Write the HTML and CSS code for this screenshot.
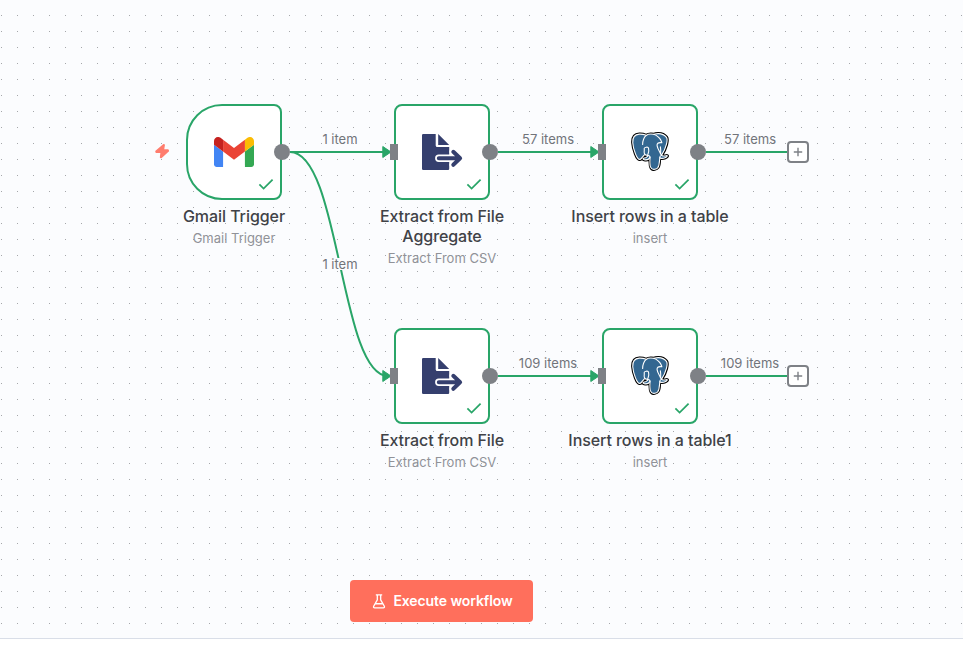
FILE: index.html
```html
<!DOCTYPE html>
<html lang="en">
<head>
<meta charset="utf-8">
<title>Workflow</title>
<link rel="stylesheet" href="styles.css">
</head>
<body>
<svg class="defs" width="0" height="0" aria-hidden="true">
  <symbol id="check" viewBox="0 0 16 12"><path d="M1.4 6.4 5.6 10.6 14.6 1.6" fill="none" stroke="#29a568" stroke-width="1.7"/></symbol>
  <symbol id="gmail" viewBox="52 42 88 66">
    <path fill="#4285f4" d="M58 108h14V74L52 59v43c0 3.32 2.69 6 6 6"/>
    <path fill="#34a853" d="M120 108h14c3.32 0 6-2.69 6-6V59l-20 15"/>
    <path fill="#fbbc04" d="M120 48v26l20-15v-8c0-7.42-8.47-11.65-14.4-7.2"/>
    <path fill="#ea4335" d="M72 74V48l24 18 24-18v26L96 92"/>
    <path fill="#c5221f" d="M52 51v8l20 15V48l-5.6-4.2c-5.94-4.45-14.4-.22-14.4 7.2"/>
  </symbol>
  <symbol id="extract" viewBox="0 0 41 36">
    <path fill="#353f6e" d="M1.2 0H13.7V11.5a1.6 1.6 0 0 0 1.6 1.6H27.2V35a1.1 1.1 0 0 1-1.1 1H1.2A1.2 1.2 0 0 1 0 34.8V1.2A1.2 1.2 0 0 1 1.2 0Z"/>
    <path fill="#353f6e" d="M16.2 0 27.2 11H16.2Z"/>
    <g fill="none" stroke-linecap="round" stroke-linejoin="round">
      <path stroke="#fff" stroke-width="7.4" d="M16.8 24.3H38M31.3 17.8l6.8 6.5-6.8 6.5"/>
      <path stroke="#353f6e" stroke-width="4" d="M16.8 24.3H38M31.3 17.8l6.8 6.5-6.8 6.5"/>
    </g>
  </symbol>
  <symbol id="postgres" viewBox="0 0 432.071 445.383">
    <path stroke="#000" stroke-width="37.4" d="M323.205 324.227c2.833-23.601 1.984-27.062 19.563-23.239l4.463.392c13.517.615 31.199-2.174 41.587-7 22.362-10.376 35.622-27.7 13.572-23.148-50.297 10.376-53.755-6.655-53.755-6.655 53.111-78.803 75.313-178.836 56.149-203.322C352.514-5.534 262.036 26.049 260.522 26.869l-.482.089c-9.938-2.062-21.06-3.294-33.554-3.496-22.761-.374-40.032 5.967-53.133 15.904 0 0-161.408-66.498-153.899 83.628 1.597 31.936 45.777 241.655 98.47 178.31 19.259-23.163 37.871-42.748 37.871-42.748 9.242 6.14 20.307 9.272 31.912 8.147l.897-.765c-.281 2.876-.157 5.689.359 9.019-13.572 15.167-9.584 17.83-36.723 23.416-27.457 5.659-11.326 15.734-.797 18.367 12.768 3.193 42.305 7.716 62.268-20.224l-.795 3.188c5.325 4.26 4.965 30.619 5.72 49.452.756 18.834 2.017 36.409 5.856 46.771 3.839 10.36 8.369 37.05 44.036 29.406 29.809-6.388 52.6-15.582 54.677-101.107"/>
    <path fill="#336791" d="M402.395 271.23c-50.302 10.376-53.76-6.655-53.76-6.655 53.111-78.808 75.313-178.843 56.153-203.326-52.27-66.785-142.752-35.2-144.262-34.38l-.486.087c-9.938-2.063-21.06-3.292-33.56-3.496-22.761-.373-40.026 5.967-53.127 15.902 0 0-161.411-66.495-153.904 83.63 1.597 31.938 45.776 241.657 98.471 178.312 19.26-23.163 37.869-42.748 37.869-42.748 9.243 6.14 20.308 9.272 31.908 8.147l.901-.765c-.28 2.876-.152 5.689.361 9.019-13.575 15.167-9.586 17.83-36.723 23.416-27.459 5.659-11.328 15.734-.796 18.367 12.768 3.193 42.307 7.716 62.266-20.224l-.796 3.188c5.319 4.26 9.054 27.711 8.428 48.969-.626 21.259-1.044 35.854 3.147 47.254 4.191 11.4 8.368 37.05 44.042 29.406 29.809-6.388 45.256-22.942 47.405-50.555 1.525-19.631 4.976-16.729 5.194-34.28l2.768-8.309c3.192-26.611.507-35.196 18.872-31.203l4.463.392c13.517.615 31.208-2.174 41.591-7 22.358-10.376 35.618-27.7 13.573-23.148z"/>
    <g fill="none" stroke="#fff" stroke-width="12.5" stroke-linecap="round" stroke-linejoin="round">
      <path d="M215.866 286.484c-1.385 49.516.348 99.377 5.193 111.495 4.848 12.118 15.223 35.688 50.9 28.045 29.806-6.39 40.651-18.756 45.357-46.051 3.466-20.082 10.148-75.854 11.005-87.281"/>
      <path d="M173.104 38.256S11.583-27.76 19.092 122.365c1.597 31.938 45.779 241.664 98.473 178.316 19.256-23.166 36.671-41.335 36.671-41.335"/>
      <path d="M260.349 26.207c-5.591 1.753 89.848-34.889 144.087 34.417 19.159 24.484-3.043 124.519-56.153 203.329"/>
      <path d="M348.282 263.953s3.461 17.036 53.764 6.653c22.04-4.552 8.776 12.774-13.577 23.155-18.345 8.514-59.474 10.696-60.146-1.069-1.729-30.355 21.647-21.133 19.96-28.739-1.525-6.85-11.979-13.573-18.894-30.338-6.037-14.633-82.796-126.849 21.287-110.183 3.813-.789-27.146-99.002-124.553-100.599-97.385-1.597-94.19 119.762-94.19 119.762"/>
      <path d="M188.604 274.334c-13.577 15.166-9.584 17.829-36.723 23.417-27.459 5.66-11.326 15.733-.797 18.365 12.768 3.195 42.307 7.718 62.266-20.229 6.078-8.509-.036-22.086-8.385-25.547-4.034-1.671-9.428-3.765-16.361 3.994z"/>
      <path d="M187.68 274.09c-.924-6.003 1.971-13.146 5.075-21.504 4.652-12.522 15.393-25.04 6.803-64.761-6.397-29.611-49.326-6.165-49.358-2.147-.026 3.887 1.88 19.72-.695 38.133-3.348 24.033 15.289 44.357 36.742 42.283"/>
      <path d="M334.223 169.172c3.195 22.361 6.66 43.79 3.466 65.5-1.2 8.5-2 13-1.5 17"/>
    </g>
  </symbol>
</svg>

<main class="canvas">
  <svg class="edges" viewBox="0 0 963 638" aria-hidden="true">
    <g fill="none" stroke="#29a568" stroke-width="2">
      <path d="M290 152H386M290 152C340 152 340 376 388 376M498 152H594M498 376H594M706 152H788M706 376H788"/>
    </g>
    <g fill="#29a568" stroke="#29a568" stroke-linejoin="round">
      <path d="M382.8 146.5 391 152l-8.2 5.5ZM382.8 370.5 391 376l-8.2 5.5ZM590.8 146.5 599 152l-8.2 5.5ZM590.8 370.5 599 376l-8.2 5.5Z"/>
    </g>
    <path fill="#ff7d6e" stroke="#ff7d6e" stroke-width="1.5" stroke-linejoin="round" d="M163.6 144.8 156 151.4 156.3 152.3H161.2L160.6 157.3 161.2 157.5 168.3 150.9 168 150H163.4L164.2 145Z"/>
  </svg>

  <span class="edge-label l1">1 item</span>
  <span class="edge-label l2">1 item</span>
  <span class="edge-label l3">57 items</span>
  <span class="edge-label l4">57 items</span>
  <span class="edge-label l5">109 items</span>
  <span class="edge-label l6">109 items</span>

  <article class="node n-gmail">
    <div class="box trigger"><svg class="gmail"><use href="#gmail"/></svg><svg class="check"><use href="#check"/></svg><i class="out"></i></div>
    <h2>Gmail Trigger</h2><p>Gmail Trigger</p>
  </article>
  <article class="node n-extract-a">
    <div class="box"><svg class="extract"><use href="#extract"/></svg><svg class="check"><use href="#check"/></svg><i class="in"></i><i class="out"></i></div>
    <h2>Extract from File<br>Aggregate</h2><p>Extract From CSV</p>
  </article>
  <article class="node n-insert-a">
    <div class="box"><svg class="postgres"><use href="#postgres"/></svg><svg class="check"><use href="#check"/></svg><i class="in"></i><i class="out"></i></div>
    <h2>Insert rows in a table</h2><p>insert</p>
  </article>
  <article class="node n-extract-b">
    <div class="box"><svg class="extract"><use href="#extract"/></svg><svg class="check"><use href="#check"/></svg><i class="in"></i><i class="out"></i></div>
    <h2>Extract from File</h2><p>Extract From CSV</p>
  </article>
  <article class="node n-insert-b">
    <div class="box"><svg class="postgres"><use href="#postgres"/></svg><svg class="check"><use href="#check"/></svg><i class="in"></i><i class="out"></i></div>
    <h2>Insert rows in a table1</h2><p>insert</p>
  </article>

  <button class="plus p1" aria-label="Add node"><svg viewBox="0 0 10 10"><path d="M5 .8v8.4M.8 5h8.4"/></svg></button>
  <button class="plus p2" aria-label="Add node"><svg viewBox="0 0 10 10"><path d="M5 .8v8.4M.8 5h8.4"/></svg></button>

  <button class="execute">
    <svg viewBox="0 0 14 16"><path d="M3.6 1h6.8M5.2 1v5.2L1.3 13.1c-.5 1 .1 1.7 1 1.7h9.4c.9 0 1.5-.7 1-1.7L8.8 6.2V1M3.2 10.4h7.6"/></svg>
    <span>Execute workflow</span>
  </button>
</main>
</body>
</html>
```
FILE: styles.css
```css
* { box-sizing: border-box; }
body {
  margin: 0;
  background: #fff;
  font-family: Inter, "Liberation Sans", sans-serif;
}
.defs { position: absolute; }
.canvas {
  position: relative;
  display: flex;
  justify-content: center;
  align-items: flex-end;
  height: 639px;
  padding: 0 80px 16px 0;
  overflow: hidden;
  border-bottom: 1px solid #d9dee8;
  background: conic-gradient(from 90deg at 15px 15px, #a5a7aa 90deg, transparent 0) 2px 0 / 16px 16px #fbfcfe;
}
.edges { position: absolute; left: 0; top: 0; width: 963px; height: 638px; }

.edge-label {
  position: absolute;
  width: 100px;
  text-align: center;
  font-size: 13px;
  line-height: 16px;
  color: #71747a;
}
.l1 { left: 290px; top: 131px; }
.l2 { left: 320px; top: 258px; width: 40px; line-height: 12px; background: #fbfcfe; }
.l3 { left: 498px; top: 131px; }
.l4 { left: 700px; top: 131px; }
.l5 { left: 498px; top: 355px; }
.l6 { left: 700px; top: 355px; }

.node {
  position: absolute;
  width: 192px;
  display: flex;
  flex-direction: column;
  align-items: center;
  text-align: center;
}
.n-gmail { left: 138px; top: 104px; }
.n-extract-a { left: 346px; top: 104px; }
.n-insert-a { left: 554px; top: 104px; }
.n-extract-b { left: 346px; top: 328px; }
.n-insert-b { left: 554px; top: 328px; }

.box {
  position: relative;
  width: 96px;
  height: 96px;
  display: flex;
  align-items: center;
  justify-content: center;
  border: 2px solid #29a568;
  border-radius: 8px;
  background: #fff;
}
.trigger { border-radius: 36px 8px 8px 36px; }
.gmail { width: 40px; height: 30px; }
.extract { width: 41px; height: 36px; }
.postgres { width: 40px; height: 39px; margin-bottom: 1px; overflow: visible; }
.check { position: absolute; right: 6px; bottom: 8px; width: 16px; height: 12px; }
.in {
  position: absolute;
  left: -6px;
  top: 38px;
  width: 8px;
  height: 16px;
  background: #7e8186;
}
.out {
  position: absolute;
  right: -10px;
  top: 38px;
  width: 16px;
  height: 16px;
  border-radius: 50%;
  background: #7e8186;
}
.node h2 {
  margin: 6px 0 0;
  font-size: 16px;
  font-weight: 500;
  line-height: 20px;
  letter-spacing: -0.07px;
  color: #404247;
}
.node p {
  margin: 4px 0 0;
  font-size: 13px;
  line-height: 16px;
  color: #909298;
}

.plus {
  position: absolute;
  left: 787px;
  width: 22px;
  height: 22px;
  padding: 0;
  display: flex;
  align-items: center;
  justify-content: center;
  border: 2px solid #7e8186;
  border-radius: 4px;
  background: #fff;
}
.plus svg { width: 10px; height: 10px; fill: none; stroke: #7e8186; stroke-width: 1.4; }
.p1 { top: 141px; }
.p2 { top: 365px; }

.execute {
  width: 183px;
  height: 42px;
  padding: 0 0 0 2px;
  display: flex;
  align-items: center;
  justify-content: center;
  gap: 7px;
  border: 0;
  border-radius: 4px;
  background: #ff6f5c;
  color: #fff;
  font: 600 14px/20px Inter, "Liberation Sans", sans-serif;
  letter-spacing: -0.1px;
}
.execute svg { width: 14px; height: 15px; fill: none; stroke: #fff; stroke-width: 1.4; stroke-linejoin: round; }
```
